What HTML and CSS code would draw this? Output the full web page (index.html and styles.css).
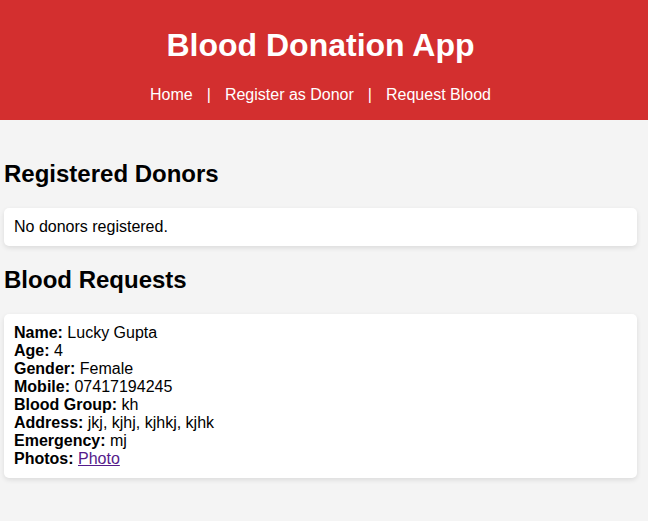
FILE: index.html
```html
<!DOCTYPE html>
<html lang="en">
<head>
<meta charset="utf-8">
<title>Blood Donation App</title>
<link rel="stylesheet" href="styles.css">
</head>
<body>
<header class="header">
  <h1>Blood Donation App</h1>
  <nav class="nav">
    <a href="#home">Home</a>
    <span>|</span>
    <a href="#register">Register as Donor</a>
    <span>|</span>
    <a href="#request">Request Blood</a>
  </nav>
</header>
<main class="content">
  <h2>Registered Donors</h2>
  <div class="card">No donors registered.</div>
  <h2>Blood Requests</h2>
  <div class="card">
    <strong>Name:</strong> Lucky Gupta<br>
    <strong>Age:</strong> 4<br>
    <strong>Gender:</strong> Female<br>
    <strong>Mobile:</strong> 07417194245<br>
    <strong>Blood Group:</strong> kh<br>
    <strong>Address:</strong> jkj, kjhj, kjhkj, kjhk<br>
    <strong>Emergency:</strong> mj<br>
    <strong>Photos:</strong> <a class="photo" href="#photo">Photo</a>
  </div>
</main>
</body>
</html>
```

FILE: styles.css
```css
body {
  margin: 0;
  background: #f4f4f4;
  color: #000;
  font: 16px/18px "Liberation Sans", Arial, sans-serif;
}

.header {
  padding: 26px 7px 16px 0;
  background: #d32f2f;
  color: #fff;
  text-align: center;
}

h1 {
  margin: 0 0 22px;
  font-size: 32px;
  line-height: 38px;
}

.nav {
  display: flex;
  justify-content: center;
  gap: 14px;
}

.nav a {
  color: #fff;
  text-decoration: none;
}

.content {
  padding: 40px 11px 40px 4px;
}

h2 {
  margin: 0 0 20px;
  font-size: 24px;
  line-height: 28px;
}

.card {
  margin-bottom: 20px;
  padding: 10px;
  border-radius: 5px;
  background: #fff;
  box-shadow: 0 2px 5px rgba(0, 0, 0, 0.1);
}

.photo {
  color: #551a8b;
}
```
